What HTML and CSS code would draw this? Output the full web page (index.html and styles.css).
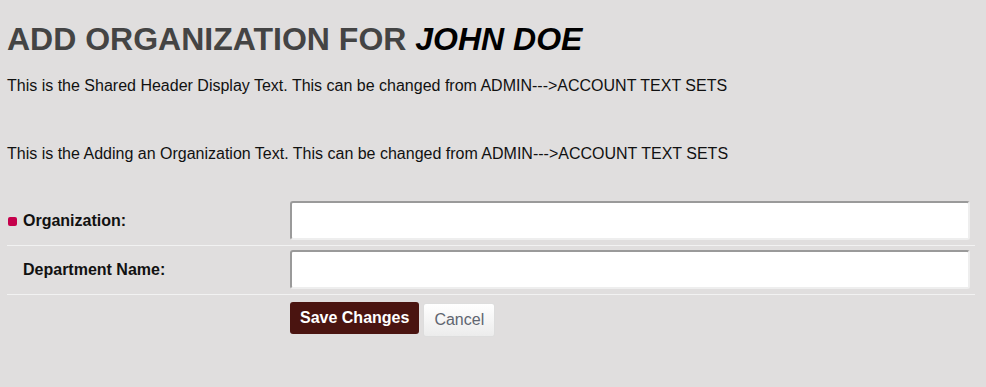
FILE: index.html
```html
<!DOCTYPE html>
<html lang="en">
<head>
  <meta charset="UTF-8">
  <meta name="viewport" content="width=device-width, initial-scale=1.0">
  <title>Add Organization</title>
  <link rel="stylesheet" href="styles.css">
</head>
<body>
  <div class="page">
    <h1>ADD ORGANIZATION FOR <em>JOHN DOE</em></h1>
    <p class="header-text">This is the Shared Header Display Text. This can be changed from ADMIN---&gt;ACCOUNT TEXT SETS</p>
    <p class="add-text">This is the Adding an Organization Text. This can be changed from ADMIN---&gt;ACCOUNT TEXT SETS</p>

    <form class="org-form">
      <div class="form-row">
        <label class="required" for="org">Organization:</label>
        <input type="text" id="org">
      </div>
      <div class="form-row">
        <label for="dept">Department Name:</label>
        <input type="text" id="dept">
      </div>
      <div class="form-actions">
        <button type="button" class="save-button">Save Changes</button>
        <button type="button" class="cancel-button">Cancel</button>
      </div>
    </form>
  </div>
</body>
</html>
```

FILE: styles.css
```css
body {
  font-family: 'Liberation Sans', Arial, sans-serif;
  background-color: #e0dede;
  color: #111;
  margin: 0;
  padding: 0;
}
.page {
  padding: 0 7px;
}
h1 {
  font-size: 32px;
  line-height: 38px;
  margin: 20px 0 0;
  color: #444;
  font-weight: bold;
}
h1 em {
  color: #000;
}
.header-text {
  font-size: 16px;
  line-height: 18px;
  margin: 19px 0 0;
}
.add-text {
  font-size: 16px;
  line-height: 18px;
  margin: 50px 0 0;
}
.org-form {
  margin-top: 34px;
  width: 968px;
}
.form-row {
  display: grid;
  grid-template-columns: 282px 680px;
  align-items: center;
  padding: 4px 0 5px 1px;
  border-bottom: 1px solid #f2f2f2;
}
.form-row label {
  font-size: 16px;
  font-weight: bold;
  padding-left: 15px;
  position: relative;
}
.form-row label.required::before {
  content: '';
  position: absolute;
  left: 0;
  top: 50%;
  margin-top: -4px;
  width: 9px;
  height: 9px;
  border-radius: 2px;
  background-color: #c5004b;
}
.form-row input {
  height: 39px;
  box-sizing: border-box;
  border: 2px solid #eee;
  border-top-color: #9a9a9a;
  border-left-color: #9a9a9a;
  border-radius: 3px;
  background-color: #fff;
  padding: 4px 8px;
  font-size: 16px;
}
.form-actions {
  display: flex;
  align-items: flex-start;
  gap: 4px;
  padding: 7px 0 0 283px;
}
.save-button {
  background-color: #4a1410;
  color: #fff;
  font-family: inherit;
  font-size: 16px;
  font-weight: bold;
  height: 32px;
  padding: 0 10px;
  border: none;
  border-radius: 3px;
  cursor: pointer;
}
.cancel-button {
  margin-top: 1px;
  background: linear-gradient(#fff, #ececec);
  color: #5f6570;
  font-family: inherit;
  font-size: 16px;
  height: 34px;
  padding: 0 10px;
  border: 1px solid #ddd;
  border-radius: 3px;
  cursor: pointer;
}
```
